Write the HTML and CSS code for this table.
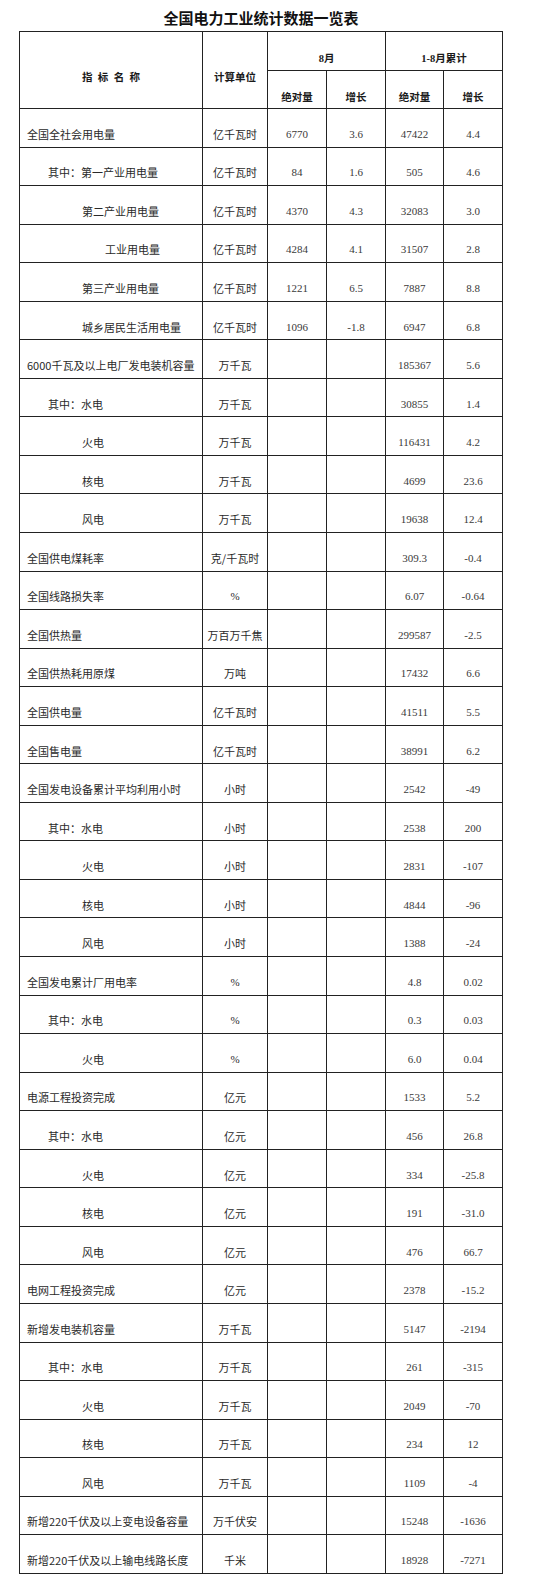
FILE: index.html
```html
<!DOCTYPE html>
<html lang="zh-CN">
<head>
<meta charset="utf-8">
<title>全国电力工业统计数据一览表</title>
<link rel="stylesheet" href="styles.css">
</head>
<body>
<div class="page">
  <h1 class="title">全国电力工业统计数据一览表</h1>
  <table class="stats">
    <colgroup>
      <col class="c-name"><col class="c-unit"><col class="c-num"><col class="c-num"><col class="c-num5"><col class="c-num">
    </colgroup>
    <thead>
      <tr class="h1">
        <th rowspan="2" class="hname">指 标 名 称</th>
        <th rowspan="2">计算单位</th>
        <th colspan="2"><span class="lat">8</span>月</th>
        <th colspan="2"><span class="lat">1-8</span>月累计</th>
      </tr>
      <tr class="h2">
        <th>绝对量</th><th>增长</th><th>绝对量</th><th>增长</th>
      </tr>
    </thead>
    <tbody>
      <tr><td class="name l0">全国全社会用电量</td><td class="unit">亿千瓦时</td><td class="num">6770</td><td class="num">3.6</td><td class="num">47422</td><td class="num">4.4</td></tr>
      <tr><td class="name l1">其中：第一产业用电量</td><td class="unit">亿千瓦时</td><td class="num">84</td><td class="num">1.6</td><td class="num">505</td><td class="num">4.6</td></tr>
      <tr><td class="name l2">第二产业用电量</td><td class="unit">亿千瓦时</td><td class="num">4370</td><td class="num">4.3</td><td class="num">32083</td><td class="num">3.0</td></tr>
      <tr><td class="name l3">工业用电量</td><td class="unit">亿千瓦时</td><td class="num">4284</td><td class="num">4.1</td><td class="num">31507</td><td class="num">2.8</td></tr>
      <tr><td class="name l2">第三产业用电量</td><td class="unit">亿千瓦时</td><td class="num">1221</td><td class="num">6.5</td><td class="num">7887</td><td class="num">8.8</td></tr>
      <tr><td class="name l2">城乡居民生活用电量</td><td class="unit">亿千瓦时</td><td class="num">1096</td><td class="num">-1.8</td><td class="num">6947</td><td class="num">6.8</td></tr>
      <tr><td class="name l0">6000千瓦及以上电厂发电装机容量</td><td class="unit">万千瓦</td><td></td><td></td><td class="num">185367</td><td class="num">5.6</td></tr>
      <tr><td class="name l1">其中：水电</td><td class="unit">万千瓦</td><td></td><td></td><td class="num">30855</td><td class="num">1.4</td></tr>
      <tr><td class="name l2">火电</td><td class="unit">万千瓦</td><td></td><td></td><td class="num">116431</td><td class="num">4.2</td></tr>
      <tr><td class="name l2">核电</td><td class="unit">万千瓦</td><td></td><td></td><td class="num">4699</td><td class="num">23.6</td></tr>
      <tr><td class="name l2">风电</td><td class="unit">万千瓦</td><td></td><td></td><td class="num">19638</td><td class="num">12.4</td></tr>
      <tr><td class="name l0">全国供电煤耗率</td><td class="unit">克/千瓦时</td><td></td><td></td><td class="num">309.3</td><td class="num">-0.4</td></tr>
      <tr><td class="name l0">全国线路损失率</td><td class="unit lat">%</td><td></td><td></td><td class="num">6.07</td><td class="num">-0.64</td></tr>
      <tr><td class="name l0">全国供热量</td><td class="unit">万百万千焦</td><td></td><td></td><td class="num">299587</td><td class="num">-2.5</td></tr>
      <tr><td class="name l0">全国供热耗用原煤</td><td class="unit">万吨</td><td></td><td></td><td class="num">17432</td><td class="num">6.6</td></tr>
      <tr><td class="name l0">全国供电量</td><td class="unit">亿千瓦时</td><td></td><td></td><td class="num">41511</td><td class="num">5.5</td></tr>
      <tr><td class="name l0">全国售电量</td><td class="unit">亿千瓦时</td><td></td><td></td><td class="num">38991</td><td class="num">6.2</td></tr>
      <tr><td class="name l0">全国发电设备累计平均利用小时</td><td class="unit">小时</td><td></td><td></td><td class="num">2542</td><td class="num">-49</td></tr>
      <tr><td class="name l1">其中：水电</td><td class="unit">小时</td><td></td><td></td><td class="num">2538</td><td class="num">200</td></tr>
      <tr><td class="name l2">火电</td><td class="unit">小时</td><td></td><td></td><td class="num">2831</td><td class="num">-107</td></tr>
      <tr><td class="name l2">核电</td><td class="unit">小时</td><td></td><td></td><td class="num">4844</td><td class="num">-96</td></tr>
      <tr><td class="name l2">风电</td><td class="unit">小时</td><td></td><td></td><td class="num">1388</td><td class="num">-24</td></tr>
      <tr><td class="name l0">全国发电累计厂用电率</td><td class="unit lat">%</td><td></td><td></td><td class="num">4.8</td><td class="num">0.02</td></tr>
      <tr><td class="name l1">其中：水电</td><td class="unit lat">%</td><td></td><td></td><td class="num">0.3</td><td class="num">0.03</td></tr>
      <tr><td class="name l2">火电</td><td class="unit lat">%</td><td></td><td></td><td class="num">6.0</td><td class="num">0.04</td></tr>
      <tr><td class="name l0">电源工程投资完成</td><td class="unit">亿元</td><td></td><td></td><td class="num">1533</td><td class="num">5.2</td></tr>
      <tr><td class="name l1">其中：水电</td><td class="unit">亿元</td><td></td><td></td><td class="num">456</td><td class="num">26.8</td></tr>
      <tr><td class="name l2">火电</td><td class="unit">亿元</td><td></td><td></td><td class="num">334</td><td class="num">-25.8</td></tr>
      <tr><td class="name l2">核电</td><td class="unit">亿元</td><td></td><td></td><td class="num">191</td><td class="num">-31.0</td></tr>
      <tr><td class="name l2">风电</td><td class="unit">亿元</td><td></td><td></td><td class="num">476</td><td class="num">66.7</td></tr>
      <tr><td class="name l0">电网工程投资完成</td><td class="unit">亿元</td><td></td><td></td><td class="num">2378</td><td class="num">-15.2</td></tr>
      <tr><td class="name l0">新增发电装机容量</td><td class="unit">万千瓦</td><td></td><td></td><td class="num">5147</td><td class="num">-2194</td></tr>
      <tr><td class="name l1">其中：水电</td><td class="unit">万千瓦</td><td></td><td></td><td class="num">261</td><td class="num">-315</td></tr>
      <tr><td class="name l2">火电</td><td class="unit">万千瓦</td><td></td><td></td><td class="num">2049</td><td class="num">-70</td></tr>
      <tr><td class="name l2">核电</td><td class="unit">万千瓦</td><td></td><td></td><td class="num">234</td><td class="num">12</td></tr>
      <tr><td class="name l2">风电</td><td class="unit">万千瓦</td><td></td><td></td><td class="num">1109</td><td class="num">-4</td></tr>
      <tr><td class="name l0">新增220千伏及以上变电设备容量</td><td class="unit">万千伏安</td><td></td><td></td><td class="num">15248</td><td class="num">-1636</td></tr>
      <tr><td class="name l0">新增220千伏及以上输电线路长度</td><td class="unit">千米</td><td></td><td></td><td class="num">18928</td><td class="num">-7271</td></tr>
    </tbody>
  </table>
</div>
</body>
</html>
```

FILE: styles.css
```css
html, body {
  margin: 0;
  padding: 0;
  background: #ffffff;
}

.page {
  padding: 8px 0 0 19px;
  width: 484px;
  font-family: "Noto Sans CJK SC", "Liberation Sans", sans-serif;
  color: #222222;
}

.title {
  margin: 0;
  font-size: 15px;
  line-height: 20px;
  font-weight: bold;
  text-align: center;
  color: #111111;
}

.stats {
  margin-top: 3px;
  width: 484px;
  table-layout: fixed;
  border-collapse: separate;
  border-spacing: 0;
  border-top: 1px solid #222222;
  border-left: 1px solid #222222;
}

.c-name { width: 183px; }
.c-unit { width: 65px; }
.c-num { width: 59px; }
.c-num5 { width: 58px; }

.stats th,
.stats td {
  border-right: 1px solid #222222;
  border-bottom: 1px solid #222222;
  padding: 13px 0 0 0;
  vertical-align: middle;
  font-size: 11px;
  line-height: 13px;
  white-space: nowrap;
  overflow: hidden;
}

.stats th {
  font-weight: bold;
  text-align: center;
  color: #1a1a1a;
  font-size: 10.5px;
}

.stats .h1 { height: 39px; }
.stats .h2 { height: 38px; }

.stats tbody tr { height: 38.55px; }

.hname { word-spacing: 3px; }

.lat {
  font-family: "Liberation Serif", serif;
}

.name {
  text-align: left;
  color: #2a2a2a;
}

.l0 { padding-left: 7px !important; }
.l1 { padding-left: 28px !important; }
.l2 { padding-left: 62px !important; }
.l3 { padding-left: 85px !important; }

.unit {
  text-align: center;
  color: #2a2a2a;
}

.num {
  text-align: center;
  font-family: "Liberation Serif", serif;
  color: #3a3a3a;
}
```
